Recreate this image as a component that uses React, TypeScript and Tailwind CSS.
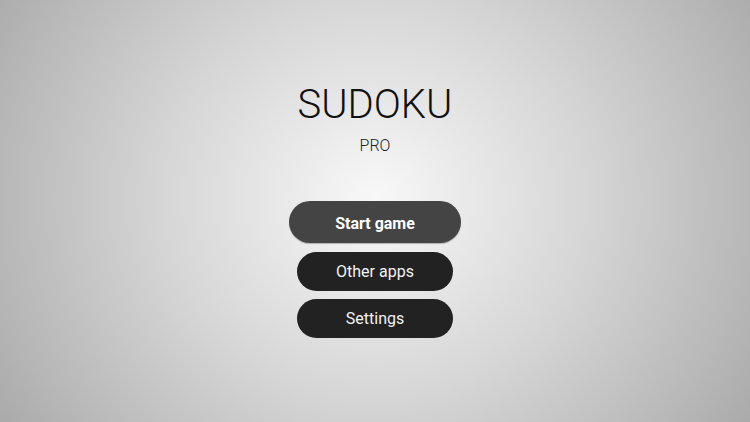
export default function App() {
  const menu = ["Other apps", "Settings"];

  return (
    <div
      className="flex h-[422px] w-full flex-col items-center bg-[radial-gradient(ellipse_60%_100%_at_50%_47%,#f8f8f8_0%,#d6d6d6_47%,#b8b8b8_83%,#a9a9a9_100%)] pt-[81px]"
      style={{ fontFamily: "Roboto, 'Liberation Sans', sans-serif" }}
    >
      <h1 className="text-[40px] font-light leading-[48px] text-[#111]">
        SUDOKU
      </h1>
      <div className="mt-[7px] text-[16px] font-light leading-[20px] text-[#222]">PRO</div>

      <div className="mt-[45px] flex flex-col items-center">
        <button className="h-[42px] w-[172px] rounded-full bg-[#444] pt-[3px] text-[16px] font-bold text-white shadow-[0_1px_1px_rgba(0,0,0,0.25)]">
          Start game
        </button>
        <div className="mt-[9px] flex flex-col gap-[8px]">
          {menu.map((label) => (
            <button
              key={label}
              className="h-[39px] w-[156px] rounded-full bg-[#222] text-[16px] text-[#f2f2f2]"
            >
              {label}
            </button>
          ))}
        </div>
      </div>
    </div>
  );
}
